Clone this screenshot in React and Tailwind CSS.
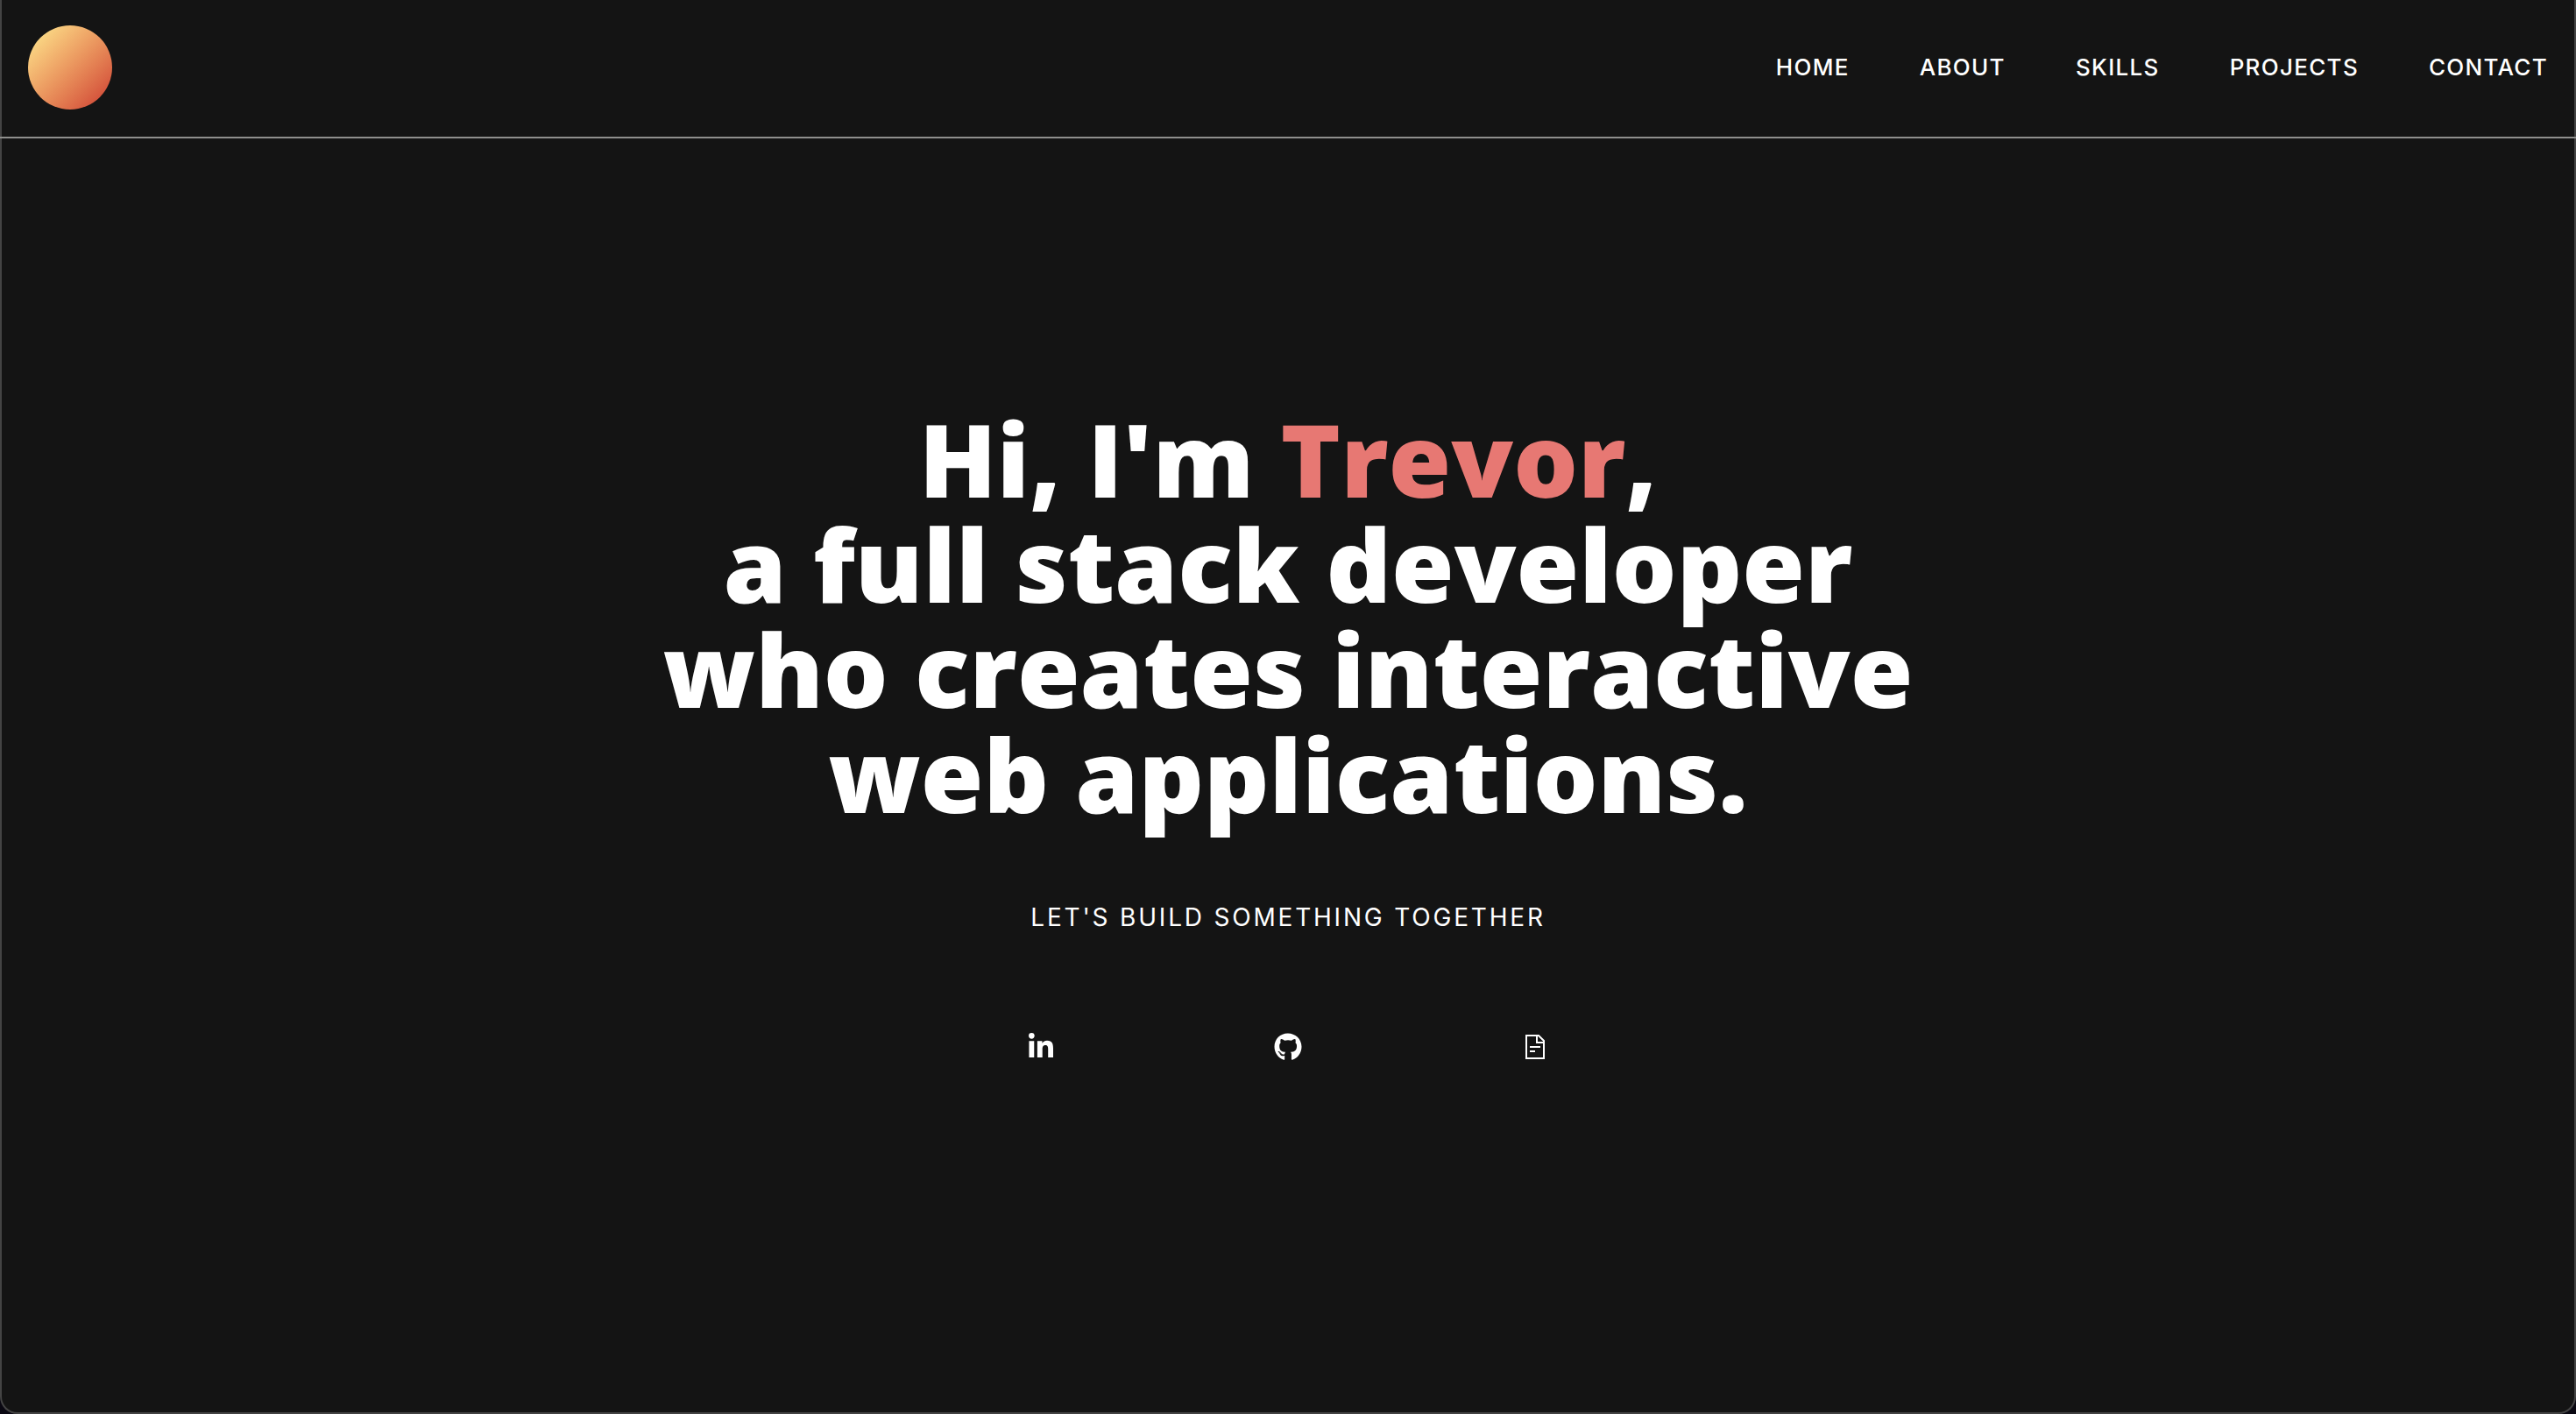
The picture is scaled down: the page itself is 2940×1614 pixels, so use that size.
import { FaGithub, FaLinkedinIn } from "react-icons/fa";

const links = ["Home", "About", "Skills", "Projects", "Contact"];

// Sheet with a folded corner and two lines of text
function DocumentIcon({ className }) {
  return (
    <svg viewBox="0 0 32 32" className={className} fill="none" stroke="currentColor" strokeWidth="2" aria-hidden="true">
      <path d="M6 3H20L26 9V29H6Z" />
      <path d="M18 3V11H26" />
      <path d="M10 16H22M10 21H16" />
    </svg>
  );
}

const socials = [
  { label: "LinkedIn", Icon: FaLinkedinIn },
  { label: "GitHub", Icon: FaGithub },
  { label: "Resume", Icon: DocumentIcon },
];

export default function App() {
  return (
    <div className="min-h-screen bg-[#0a0812] font-['Inter',sans-serif] text-white">
      <div className="flex min-h-screen flex-col rounded-b-[20px] border-x-2 border-b-2 border-[#444444] bg-[#141414]">
        <header className="-mx-0.5 flex items-center justify-between border-b-2 border-[#8f8f8d] px-8 pt-[29px] pb-[31px]">
          <a href="#home" aria-label="Home" className="size-24 rounded-full bg-linear-to-br from-[#fdec90] to-[#cb3530]" />
          <nav className="flex gap-20 text-[26px] leading-8 font-medium tracking-wider uppercase">
            {links.map((link) => (
              <a key={link} href={`#${link.toLowerCase()}`}>{link}</a>
            ))}
          </nav>
        </header>
        <main className="flex flex-col items-center pt-[305px] text-center">
          <h1 className="font-['Open_Sans',sans-serif] text-[116px] leading-[120px] font-extrabold">
            Hi, I'm <span className="text-[#e77873]">Trevor</span>,
            <br />a full stack developer
            <br />who creates interactive
            <br />web applications.
          </h1>
          <p className="mt-[88px] text-[28px] leading-8 tracking-widest uppercase">Let's build something together</p>
          <div className="mt-[116px] flex gap-[250px]">
            {socials.map(({ label, Icon }) => (
              <a key={label} href={`#${label.toLowerCase()}`} aria-label={label}>
                <Icon className="size-8" />
              </a>
            ))}
          </div>
        </main>
      </div>
    </div>
  );
}
